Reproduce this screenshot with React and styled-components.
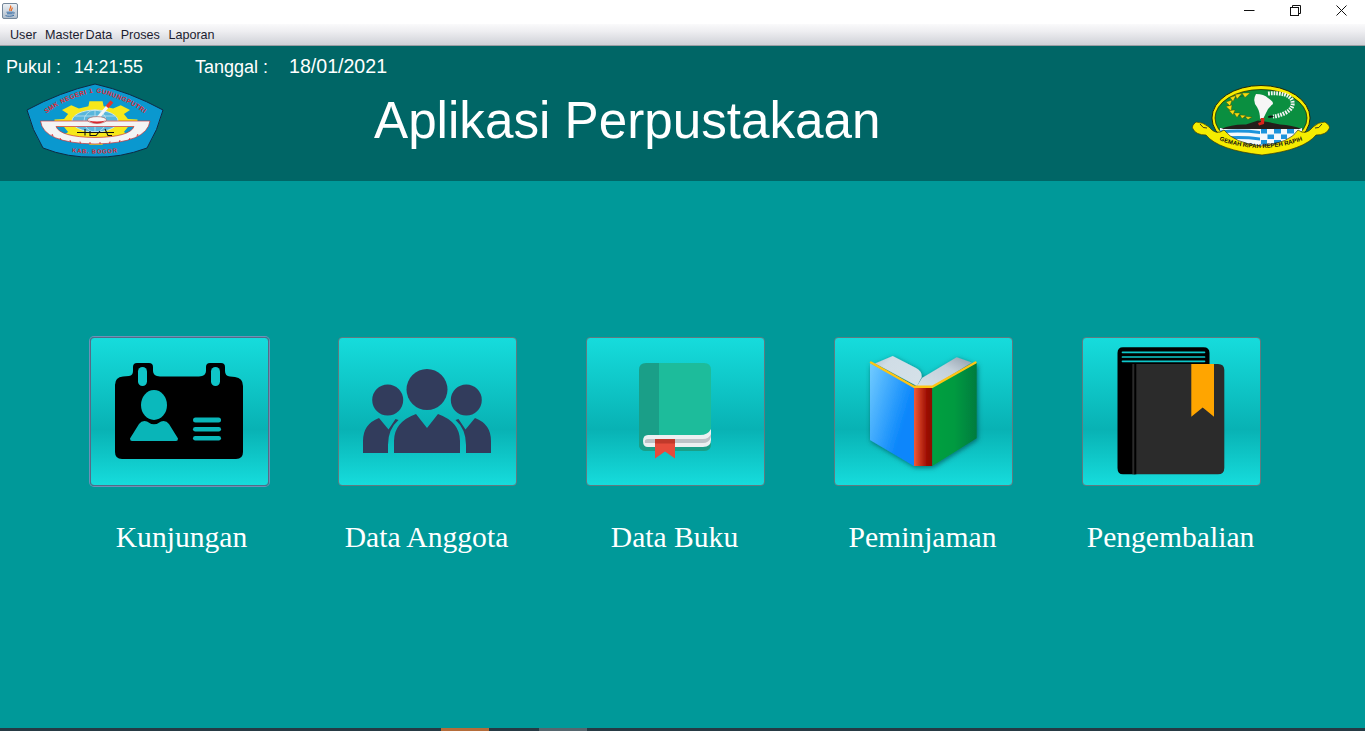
import React from "react";
import styled, { createGlobalStyle } from "styled-components";

const Global = createGlobalStyle`
  html, body { margin: 0; padding: 0; background: #009999; }
  body { font-family: "Liberation Sans", Arial, sans-serif; overflow: hidden; }
  #root { height: 100vh; }
`;

const Window = styled.div`
  height: 731px;
  display: flex;
  flex-direction: column;
`;

const TitleBar = styled.div`
  height: 24px;
  flex: none;
  background: #fff;
  display: flex;
  align-items: flex-start;
  justify-content: space-between;
  padding: 3px 1px 0 2px;
  box-sizing: border-box;
`;

const WindowControls = styled.div`
  display: flex;
  margin-top: -3px;
`;

const ControlButton = styled.div`
  width: 46px;
  height: 21px;
  display: flex;
  align-items: center;
  justify-content: center;
  color: #111;
`;

const MenuBar = styled.nav`
  height: 22px;
  flex: none;
  box-sizing: border-box;
  display: flex;
  align-items: center;
  gap: 8.5px;
  padding: 1px 0 0 10px;
  background: linear-gradient(#fafafb 0%, #eeeef1 35%, #cfd1d7 100%);
  border-bottom: 1px solid #9a9ea4;
`;

const MenuItem = styled.span`
  font-family: "Liberation Sans", Arial, sans-serif;
  font-size: 12.6px;
  word-spacing: -1.5px;
  color: #1c1c30;
  white-space: nowrap;
`;

const Header = styled.header`
  height: 135px;
  flex: none;
  background: #006666;
  color: #fff;
  display: flex;
  flex-direction: column;
`;

const InfoRow = styled.div`
  height: 37px;
  flex: none;
  display: flex;
  align-items: center;
  padding: 6px 0 0 6px;
  box-sizing: border-box;
`;

const InfoGroup = styled.div`
  width: ${(p) => p.$width}px;
  display: flex;
  align-items: center;
`;

const InfoLabel = styled.span`
  width: ${(p) => p.$width}px;
  font-size: 18px;
  white-space: nowrap;
`;

const InfoValue = styled.span`
  font-size: ${(p) => p.$size}px;
  white-space: nowrap;
  position: relative;
  top: ${(p) => p.$lift}px;
`;

const BrandRow = styled.div`
  display: flex;
  align-items: center;
  height: 75px;
  padding: 0 35px 0 25px;
`;

const Title = styled.h1`
  flex: 1;
  margin: 0 0 0 208px;
  font-size: 51.2px;
  font-weight: 400;
  white-space: nowrap;
  line-height: 73px;
`;

const Main = styled.main`
  flex: 1;
  background: #009999;
  padding: 156px 0 0 90px;
`;

const TileRow = styled.div`
  display: grid;
  grid-template-columns: repeat(5, 179px);
  column-gap: 69px;
`;

const Tile = styled.div`
  display: flex;
  flex-direction: column;
  align-items: center;
  gap: 34px;
`;

const TileButton = styled.button`
  width: 179px;
  height: 149px;
  padding: 0;
  box-sizing: border-box;
  border: 1px solid ${(p) => (p.$focused ? "#566a86" : "#5f7b80")};
  border-radius: 4px;
  background: linear-gradient(#16dcdc 0%, #08b2b4 62%, #16dcdc 100%);
  box-shadow: ${(p) => (p.$focused ? "0 0 0 1px #6d91b8" : "none")};
  display: block;
  overflow: hidden;
  svg { display: block; margin: -1px; }
`;

const TileLabel = styled.span`
  font-family: "Liberation Serif", "Times New Roman", serif;
  font-size: 29.6px;
  line-height: 34px;
  color: #fff;
  white-space: nowrap;
  padding-left: ${(p) => p.$nudge || 0}px;
  padding-right: 2px;
`;

const Taskbar = styled.div`
  height: 3px;
  flex: none;
  background: #263a44;
  display: flex;
  padding-left: 441px;
`;

const TaskSlot = styled.div`
  width: 48px;
  margin-right: ${(p) => p.$after || 0}px;
  background: ${(p) => p.$color};
`;

function gearPath(cx, cy, rx, ry, teeth) {
  const pts = [];
  const step = (Math.PI * 2) / teeth;
  for (let i = 0; i < teeth; i++) {
    const a = i * step - Math.PI / 2;
    const outer = [a - step * 0.2, a + step * 0.2];
    const inner = [a + step * 0.3, a + step * 0.7];
    outer.forEach((t) => pts.push([cx + rx * Math.cos(t), cy + ry * Math.sin(t)]));
    inner.forEach((t) => pts.push([cx + rx * 0.78 * Math.cos(t), cy + ry * 0.78 * Math.sin(t)]));
  }
  return "M" + pts.map((p) => p[0].toFixed(1) + " " + p[1].toFixed(1)).join("L") + "Z";
}

const JavaIcon = () => (
  <svg width="16" height="16" viewBox="0 0 16 16">
    <defs>
      <linearGradient id="jbg" x1="0" y1="0" x2="0" y2="1">
        <stop offset="0" stopColor="#eef2f6" />
        <stop offset="1" stopColor="#aebccb" />
      </linearGradient>
    </defs>
    <rect x="0.5" y="0.5" width="15" height="15" rx="1.5" fill="url(#jbg)" stroke="#74879a" />
    <path d="M8.5 2.5C10 4.5 6.5 5.5 8 8M10 4.5C11 6 8.5 6.5 9.5 8" fill="none" stroke="#e8661c" strokeWidth="1.2" />
    <path d="M4.5 9.2h6.5M5 10.8h5.5M3.5 12.6c2 .9 6 .9 8.5-.3" fill="none" stroke="#3a6ea5" strokeWidth="1" />
    <path d="M11 9.2c2-.4 2 1.6-.4 1.8" fill="none" stroke="#3a6ea5" strokeWidth=".8" />
  </svg>
);

const SchoolLogo = () => (
  <svg width="141" height="75" viewBox="25 83 141 75" style={{ flex: "none" }}>
    <defs>
      <path id="schoolArc" d="M41 118 Q62 99 95 92 Q128 99 150 118" />
      <path id="kabArc" d="M62 151 Q95 156 128 151" />
    </defs>
    <path d="M27 110 Q60 92 95 84 Q130 92 163 110 Q158 130 147 148 Q120 158 95 157 Q68 158 43 148 Q32 130 27 110Z" fill="#0a98cf" stroke="#0e2a44" strokeWidth="1" />
    <path d={gearPath(96, 123, 42, 22, 8)} fill="#f6e81a" />
    <ellipse cx="95" cy="121" rx="23" ry="11" fill="#58b6dc" stroke="#d8eef6" strokeWidth=".8" />
    <path d="M72 121H118M75 116H115M75 126H115M95 110V132" stroke="#cfe9f4" strokeWidth=".7" fill="none" />
    <ellipse cx="95" cy="121" rx="11" ry="11" fill="none" stroke="#cfe9f4" strokeWidth=".7" />
    <path fillRule="evenodd" d="M40.5 121H150Q147 143 95 144Q43 143 40.5 121ZM56 126.5Q60 137 95 137.5Q130 137 134 126.5Z" fill="#f4f4f4" stroke="#c8353a" strokeWidth=".7" />
    <path d="M52 134l1 2M60 138l1 2M70 140l.6 2M80 141.500l.4 2M90 142v2M100 142v2M110 141.500l-.4 2M120 140l-.6 2M130 138l-1 2M138 134l-1 2" stroke="#d8262c" strokeWidth=".9" />
    <path d="M77 132.500H114M85 129V135.500M90 131V135.500H96L100 131M105 129L108 135.500H112" stroke="#111" strokeWidth="1.1" fill="none" />
    <path d="M97 119L108 106" stroke="#f6f6f6" strokeWidth="3.2" />
    <path d="M107 107L112 101.500" stroke="#e0352e" strokeWidth="3.6" />
    <ellipse cx="97" cy="120" rx="9.500" ry="3.400" fill="#f6f6f6" stroke="#8c3030" strokeWidth=".5" />
    <path d="M88 120.500Q97 126.500 106 120.500Q97 122.500 88 120.500Z" fill="#d8262c" />
    <text fontFamily="Liberation Sans" fontWeight="700" fontSize="6.400" fill="#e3262e" letterSpacing=".55">
      <textPath href="#schoolArc" startOffset="50%" textAnchor="middle">SMK NEGERI 1 GUNUNGPUTRI</textPath>
    </text>
    <text fontFamily="Liberation Sans" fontWeight="700" fontSize="6" fill="#e3262e" letterSpacing=".7">
      <textPath href="#kabArc" startOffset="50%" textAnchor="middle">KAB. BOGOR</textPath>
    </text>
  </svg>
);

const ProvinceLogo = () => (
  <svg width="140" height="75" viewBox="1190 83 140 75" style={{ flex: "none" }}>
    <defs>
      <path id="ribbonArc" d="M1209 136 Q1260 160 1313 136" />
      <clipPath id="disc"><ellipse cx="1261" cy="118" rx="46" ry="28.500" /></clipPath>
    </defs>
    <ellipse cx="1261" cy="118" rx="49" ry="32.500" fill="#f6ec00" stroke="#1a1a00" strokeWidth=".9" />
    <ellipse cx="1261" cy="118" rx="46" ry="28.500" fill="#0a8f40" stroke="#1a1a00" strokeWidth=".7" />
    <g clipPath="url(#disc)">
      <rect x="1220" y="128" width="41" height="19" fill="#f4f8fb" />
      <path d="M1220 130.500Q1240 128.500 1260 131V134Q1240 131.500 1220 133.500ZM1220 137Q1240 135 1260 137.500V140.500Q1240 138 1220 140Z" fill="#1c94dc" />
      <rect x="1260" y="128" width="42" height="19" fill="#f4f8fb" />
      <path d="M1261 129h6v4.500h-6zM1274 129h7v4.500h-7zM1287 129h7v4.500h-7zM1267.500 134.500h6.500v4.500h-6.500zM1281 134.500h6v4.500h-6zM1294 134.500h6v4.500h-6zM1261 140h6v4.500h-6zM1274 140h7v4.500h-7zM1287 140h7v4.500h-7z" fill="#1c94dc" />
      <path d="M1221 129Q1232 124 1246 124.500L1258 120.500 1268 122 1280 124.500Q1292 125 1302 129Z" fill="#241e1a" />
    </g>
    <path d="M1256 94Q1264 94 1268 98Q1273 101 1273 104Q1268 108 1266 113L1263 119H1260Q1260 112 1257 107Q1252 101 1256 94Z" fill="#f6f6f6" />
    <path d="M1260.500 118H1264.500L1264 124 1259 125.500 1258 123 1261 122Z" fill="#d9261c" />
    <path d="M1247 95Q1228 98 1228 106Q1230 116 1251 118" fill="none" stroke="#0a6a30" strokeWidth="1" />
    <path d="M1242 93l8 0-5 4.500zM1235 94.500l7-1-5 5.500zM1230 97.500l6-2-3 6zM1226 102l6-2-2 6zM1226 106.500l6-1.500-1 6zM1229 110.500l6-.5-2 5zM1234 113l6 0-3 4.500zM1240 115l6 .5-4 3zM1245 116.500l7 .5-4 2.500z" fill="#f4dc10" stroke="#4c4400" strokeWidth=".35" />
    <path d="M1268 93.500Q1288 92 1292 100Q1295 108 1285 113Q1279 116 1273 116.500" fill="none" stroke="#f6f6f6" strokeWidth="4" strokeDasharray="1.700 1" />
    <path d="M1268 116.500q3-2 6 0-3 1.800-6 1z" fill="#111" />
    <path d="M1224 130Q1216 136 1209 127Q1203 122 1196 122Q1191 126 1193 129Q1196 135 1206 135Q1218 150 1262 155Q1304 150 1316 135Q1326 135 1329 129Q1331 126 1325 122Q1318 122 1313 127Q1306 136 1298 130Q1290 143 1261 146Q1234 143 1224 130Z" fill="#f6ec00" stroke="#3c3800" strokeWidth=".7" />
    <path d="M1200 124q3 5 7 4M1322 124q-3 5-7 4" fill="none" stroke="#222" strokeWidth=".9" />
    <text fontFamily="Liberation Sans" fontWeight="700" fontSize="6" fill="#111" letterSpacing="0">
      <textPath href="#ribbonArc" startOffset="50%" textAnchor="middle">GEMAH RIPAH REPEH RAPIH</textPath>
    </text>
  </svg>
);

const CardIcon = () => (
  <svg width="179" height="149" viewBox="90 337 179 149">
    <path d="M115 385Q115 377 123 376.500L129 376Q133 375.500 133 371V367Q133 363 137 363H149Q153 363 153 367V371Q153 376 160 376.500H199Q206 376 206 371V367Q206 363 210 363H221Q225 363 225 367V371Q225 376 230 376.500L235 377Q243 378 243 386V452Q243 459 236 459H122Q115 459 115 452Z" fill="#000" />
    <rect x="138" y="367" width="9" height="19" rx="4.500" fill="#0fc5c8" />
    <rect x="211" y="367" width="9" height="19" rx="4.500" fill="#0fc5c8" />
    <ellipse cx="154" cy="405" rx="13" ry="15" fill="#0ab9bc" />
    <path d="M130 438.500L139 424Q142 420 147 421.500Q154 427 161 421.500Q166 420 169 424L178 438.500Q178 441 176 441H132Q130 441 130 438.500Z" fill="#09b5b8" />
    <rect x="193" y="417.500" width="28" height="5" rx="2.500" fill="#09b6b9" />
    <rect x="193" y="427" width="28" height="4.500" rx="2.250" fill="#09b6b9" />
    <rect x="193" y="436" width="28" height="4.500" rx="2.250" fill="#09b8bb" />
  </svg>
);

const PeopleIcon = () => (
  <svg width="179" height="149" viewBox="338 337 179 149">
    <g fill="#323c5c">
      <circle cx="427" cy="389.500" r="20.500" />
      <circle cx="387.700" cy="400" r="15.500" />
      <circle cx="466.300" cy="400" r="15.500" />
      <path d="M394 453V441Q394 422 416 414L427 428 438 414Q460 422 460 441V453Z" />
      <path d="M363 453V441Q363 424 379 418L388.500 429.500 395.500 419 398.500 420Q388 429 388 445V453Z" />
      <path d="M491 453V441Q491 424 475 418L465.500 429.500 458.500 419 455.500 420Q466 429 466 445V453Z" />
    </g>
  </svg>
);

const GreenBookIcon = () => (
  <svg width="179" height="149" viewBox="586 337 179 149">
    <path d="M646 363H659V451H646Q639 451 639 444V370Q639 363 646 363Z" fill="#1a9f88" />
    <path d="M659 363H704Q711 363 711 370V444Q711 451 704 451H659Z" fill="#1dbc9b" />
    <path d="M639 441H711V444Q711 451 704 451H646Q639 451 639 444Z" fill="#1a9f88" />
    <path d="M648 435H700Q708 435 711 429V440Q711 447 703 447H648Q643 447 643 441Q643 435 648 435Z" fill="#ecf0f1" />
    <path d="M648 439H703Q709 439 711 434V437Q709 443 703 443H645Q644 439 648 439Z" fill="#bdc3c7" />
    <path d="M655 439H675V458.500L665 451.500 655 458.500Z" fill="#e74c3c" />
    <rect x="655" y="439" width="20" height="4.500" fill="#c0392b" />
  </svg>
);

const OpenBookIcon = () => (
  <svg width="179" height="149" viewBox="834 337 179 149">
    <defs>
      <linearGradient id="blueCover" x1="0" y1="0" x2="1" y2="0.700">
        <stop offset="0" stopColor="#72ccff" />
        <stop offset="0.800" stopColor="#0a86fb" />
      </linearGradient>
      <linearGradient id="redSpine" x1="0" y1="0" x2="1" y2="0">
        <stop offset="0" stopColor="#f05a36" />
        <stop offset="0.750" stopColor="#980800" />
        <stop offset="1" stopColor="#8c0a04" />
      </linearGradient>
      <linearGradient id="greenCover" x1="0" y1="0" x2="1" y2="0">
        <stop offset="0" stopColor="#00a040" />
        <stop offset="0.500" stopColor="#009a40" />
        <stop offset="1" stopColor="#007c3e" />
      </linearGradient>
      <linearGradient id="pageLeft" x1="0" y1="0" x2="1" y2="0.600">
        <stop offset="0" stopColor="#b4c2cc" />
        <stop offset="0.300" stopColor="#d0dde6" />
        <stop offset="1" stopColor="#d4e0e8" />
      </linearGradient>
      <linearGradient id="pageRight" x1="0" y1="1" x2="1" y2="0">
        <stop offset="0" stopColor="#d4e0e8" />
        <stop offset="0.600" stopColor="#c4d0da" />
        <stop offset="1" stopColor="#8f9daa" />
      </linearGradient>
      <filter id="bookShadow" x="-20%" y="-20%" width="140%" height="140%">
        <feDropShadow dx="1" dy="1.500" stdDeviation="2.500" floodColor="#004848" floodOpacity="0.700" />
      </filter>
    </defs>
    <g filter="url(#bookShadow)">
      <path d="M875 363.500L892.700 356 916 368Q922 371 921.700 377L917 386 880 366Z" fill="url(#pageLeft)" />
      <path d="M917 386L922 378 956.700 357.300 971.700 362.500 932.300 386.700Z" fill="url(#pageRight)" />
      <path d="M870 363.300L914 386.700V466L870 440Z" fill="url(#blueCover)" />
      <rect x="914" y="386.700" width="18.300" height="79.300" fill="url(#redSpine)" />
      <path d="M932.300 386.700L976.700 362.700V438.300L932.300 466Z" fill="url(#greenCover)" />
    </g>
    <path d="M871 362.500L914 386.700H932.300L975.500 362.500" fill="none" stroke="#ffc414" strokeWidth="2.400" strokeLinecap="round" />
  </svg>
);

const DarkBookIcon = () => (
  <svg width="179" height="149" viewBox="1082 337 179 149">
    <path d="M1117.500 353Q1117.500 347.300 1123 347.300H1203.500Q1209.500 347.300 1209.500 353V366H1135V474.300H1123Q1117.500 474.300 1117.500 468Z" fill="#000" />
    <path d="M1122.500 352.300H1204.500M1122.500 357H1204.500M1122.500 361.300H1204.500" stroke="#0ec8cb" strokeWidth="1.700" strokeLinecap="round" />
    <path d="M1132.300 364H1218Q1224.300 364 1224.300 370V468Q1224.300 474.300 1218 474.300H1132.300Z" fill="#2b2b2b" />
    <rect x="1134.300" y="364" width="2" height="110.300" fill="#000" />
    <path d="M1191.300 364H1214V416.700L1202.700 407.500 1191.300 416.700Z" fill="#ffa500" />
  </svg>
);

const tiles = [
  { label: "Kunjungan", Icon: CardIcon, focused: true, nudge: 6 },
  { label: "Data Anggota", Icon: PeopleIcon },
  { label: "Data Buku", Icon: GreenBookIcon },
  { label: "Peminjaman", Icon: OpenBookIcon },
  { label: "Pengembalian", Icon: DarkBookIcon },
];

export default function App() {
  return (
    <Window>
      <Global />
      <TitleBar>
        <JavaIcon />
        <WindowControls>
          <ControlButton>
            <svg width="11" height="11" viewBox="0 0 11 11"><path d="M0 5.500H10.500" stroke="currentColor" /></svg>
          </ControlButton>
          <ControlButton>
            <svg width="11" height="11" viewBox="0 0 11 11" fill="none" stroke="currentColor"><rect x=".5" y="2.500" width="8" height="8" /><path d="M2.500 2.500V.5H10.500V8.500H8.500" /></svg>
          </ControlButton>
          <ControlButton>
            <svg width="11" height="11" viewBox="0 0 11 11"><path d="M.5.5L10.500 10.500M10.500.5L.5 10.500" stroke="currentColor" /></svg>
          </ControlButton>
        </WindowControls>
      </TitleBar>
      <MenuBar>
        <MenuItem>User</MenuItem>
        <MenuItem>Master Data</MenuItem>
        <MenuItem>Proses</MenuItem>
        <MenuItem>Laporan</MenuItem>
      </MenuBar>
      <Header>
        <InfoRow>
          <InfoGroup $width={189}>
            <InfoLabel $width={68}>Pukul :</InfoLabel>
            <InfoValue $size={17.7} $lift={0}>14:21:55</InfoValue>
          </InfoGroup>
          <InfoGroup $width={200}>
            <InfoLabel $width={94}>Tanggal :</InfoLabel>
            <InfoValue $size={19.6} $lift={-1}>18/01/2021</InfoValue>
          </InfoGroup>
        </InfoRow>
        <BrandRow>
          <SchoolLogo />
          <Title>Aplikasi Perpustakaan</Title>
          <ProvinceLogo />
        </BrandRow>
      </Header>
      <Main>
        <TileRow>
          {tiles.map(({ label, Icon, focused, nudge }) => (
            <Tile key={label}>
              <TileButton $focused={focused}><Icon /></TileButton>
              <TileLabel $nudge={nudge}>{label}</TileLabel>
            </Tile>
          ))}
        </TileRow>
      </Main>
      <Taskbar>
        <TaskSlot $color="#b56c3a" $after={50} />
        <TaskSlot $color="#56666e" />
      </Taskbar>
    </Window>
  );
}
